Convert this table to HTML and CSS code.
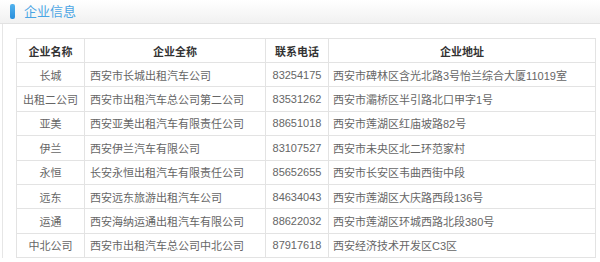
FILE: index.html
```html
<!DOCTYPE html>
<html lang="zh-CN">
<head>
<meta charset="utf-8">
<title>企业信息</title>
<link rel="stylesheet" href="styles.css">
</head>
<body>
<div class="panel">
  <div class="panel-head">
    <span class="bar"></span>
    <h2 class="title">企业信息</h2>
  </div>
  <div class="panel-body">
    <table class="info">
      <colgroup>
        <col class="c1"><col class="c2"><col class="c3"><col class="c4">
      </colgroup>
      <thead>
        <tr><th>企业名称</th><th>企业全称</th><th>联系电话</th><th>企业地址</th></tr>
      </thead>
      <tbody>
        <tr><td class="ctr">长城</td><td>西安市长城出租汽车公司</td><td class="ctr">83254175</td><td>西安市碑林区含光北路3号怡兰综合大厦11019室</td></tr>
        <tr><td class="ctr">出租二公司</td><td>西安市出租汽车总公司第二公司</td><td class="ctr">83531262</td><td>西安市灞桥区半引路北口甲字1号</td></tr>
        <tr><td class="ctr">亚美</td><td>西安亚美出租汽车有限责任公司</td><td class="ctr">88651018</td><td>西安市莲湖区红庙坡路82号</td></tr>
        <tr><td class="ctr">伊兰</td><td>西安伊兰汽车有限公司</td><td class="ctr">83107527</td><td>西安市未央区北二环范家村</td></tr>
        <tr><td class="ctr">永恒</td><td>长安永恒出租汽车有限责任公司</td><td class="ctr">85652655</td><td>西安市长安区韦曲西街中段</td></tr>
        <tr><td class="ctr">远东</td><td>西安远东旅游出租汽车公司</td><td class="ctr">84634043</td><td>西安市莲湖区大庆路西段136号</td></tr>
        <tr><td class="ctr">运通</td><td>西安海纳运通出租汽车有限公司</td><td class="ctr">88622032</td><td>西安市莲湖区环城西路北段380号</td></tr>
        <tr><td class="ctr">中北公司</td><td>西安市出租汽车总公司中北公司</td><td class="ctr">87917618</td><td>西安经济技术开发区C3区</td></tr>
      </tbody>
    </table>
  </div>
</div>
</body>
</html>
```
FILE: styles.css
```css
html, body {
  margin: 0;
  padding: 0;
  background: #fff;
}
body {
  font-family: "Liberation Sans", "Noto Sans CJK SC", sans-serif;
  font-size: 11px;
  color: #666;
}
.panel {
  width: 600px;
}
.panel-head {
  height: 23px;
  display: flex;
  align-items: center;
  background: linear-gradient(#ffffff, #f1f1f1);
  border-bottom: 1px solid #e2e2e2;
  box-sizing: content-box;
}
.bar {
  width: 5px;
  height: 15px;
  margin-left: 10px;
  margin-top: -1px;
  border-radius: 2px;
  background: linear-gradient(#52b3ee, #2a8fdc);
}
.title {
  margin: 0 0 0 9px;
  font-family: "Noto Sans CJK SC", sans-serif;
  font-weight: normal;
  font-size: 13px;
  line-height: 16px;
  color: #4aa5e4;
  margin-top: -2px;
}
.panel-body {
  margin-left: 2px;
  border-left: 1px solid #e6e6e6;
  padding: 14px 0 0 13px;
}
.info {
  border-collapse: collapse;
  width: 579px;
  table-layout: fixed;
}
.c1 { width: 68px; }
.c2 { width: 181px; }
.c3 { width: 63px; }
.c4 { width: 267px; }
.info th, .info td {
  border: 1px solid #e3e3e3;
  height: 23.4px;
  padding: 0 0 0 5px;
  text-align: left;
  white-space: nowrap;
  overflow: hidden;
}
.info th {
  text-align: center;
  padding: 0;
  height: 23px;
  font-family: "Noto Sans CJK SC", sans-serif;
  font-weight: bold;
  font-size: 11px;
  color: #333;
}
.info td.ctr {
  text-align: center;
  padding: 0;
}
.info td:nth-child(4) {
  padding-left: 4px;
}
```
